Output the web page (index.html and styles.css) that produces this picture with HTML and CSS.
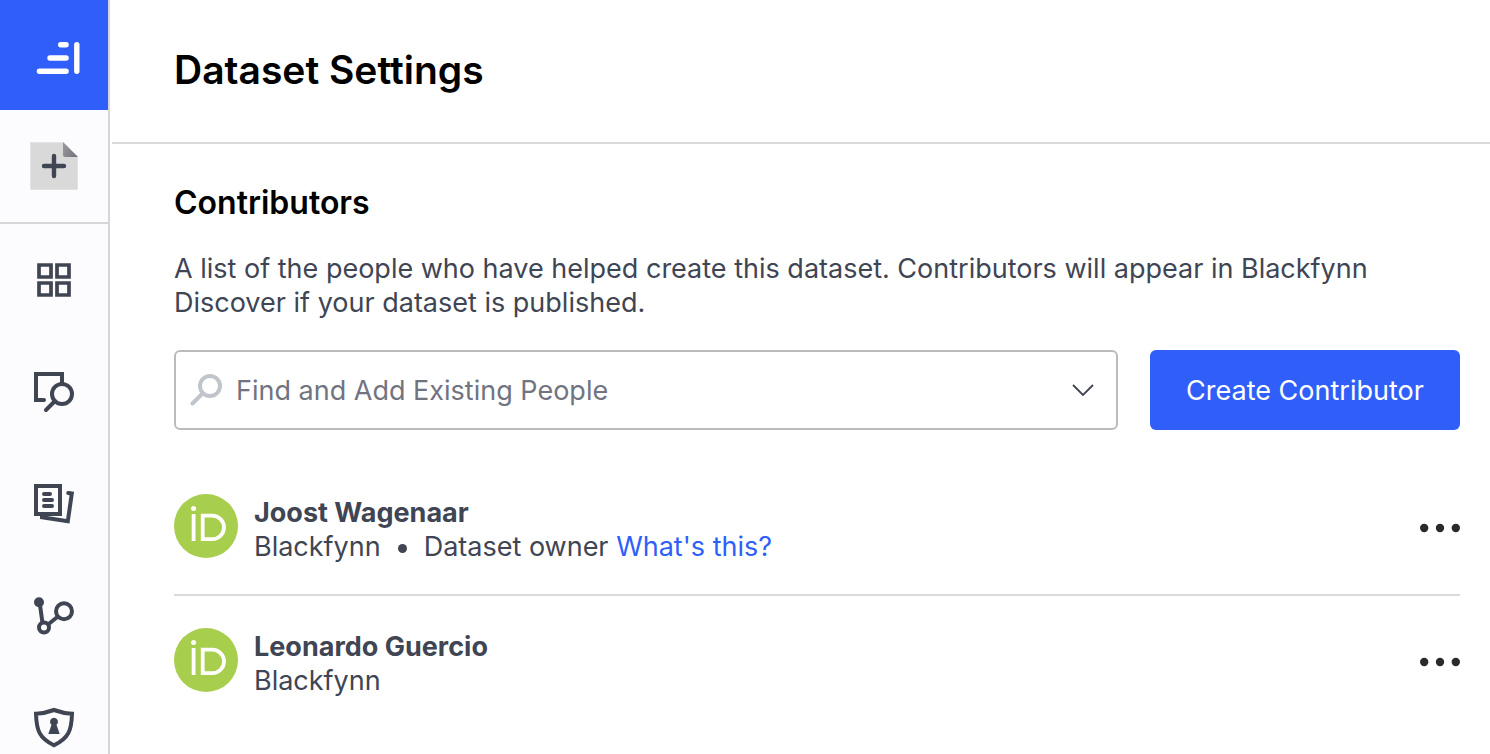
FILE: index.html
```html
<!DOCTYPE html>
<html lang="en">
<head>
<meta charset="utf-8">
<title>Dataset Settings</title>
<link rel="stylesheet" href="styles.css">
</head>
<body>
<div class="app">
  <aside class="sidebar">
    <a class="brand" href="#" aria-label="Home">
      <svg width="48" height="48" viewBox="0 0 48 48" fill="none" stroke="currentColor" stroke-width="5.4" stroke-linecap="round">
        <path d="M26.7 10.7h5.4M16 24h16.1M5.4 37.3h26.7M42.8 10.7v26.6"/>
      </svg>
    </a>
    <div class="create">
      <button class="icon-button" type="button" aria-label="New dataset">
        <svg width="48" height="48" viewBox="0 0 48 48">
          <defs>
            <linearGradient id="fold" x1="0" y1="0.4" x2="1" y2="1">
              <stop offset="0" stop-color="#95969c"/>
              <stop offset="1" stop-color="#6f7077"/>
            </linearGradient>
          </defs>
          <path d="M.5 .5H33L47.500 15V47.500H.5Z" fill="#d9d9d9" stroke="#e3e3e4"/>
          <path d="M33 0L48 15H35a2 2 0 0 1-2-2Z" fill="url(#fold)"/>
          <path d="M14 24h20M24 14v20" stroke="currentColor" stroke-width="4.400" stroke-linecap="round"/>
        </svg>
      </button>
    </div>
    <nav class="nav">
      <a class="nav-link" href="#" aria-label="Overview">
        <svg width="48" height="48" viewBox="0 0 48 48" fill="none" stroke="currentColor" stroke-width="3.700">
          <path d="M9 9h12v12H9zM27 9h12v12H27zM9 27h12v12H9zM27 27h12v12H27z"/>
        </svg>
      </a>
      <a class="nav-link" href="#" aria-label="Explore">
        <svg width="48" height="48" viewBox="0 0 48 48" fill="none" stroke="currentColor" stroke-width="4">
          <path d="M32 16V6H6v26h8"/>
          <path d="M14 32h0M25 33l-9 9" stroke-linecap="round"/>
          <circle cx="32" cy="26" r="10"/>
        </svg>
      </a>
      <a class="nav-link" href="#" aria-label="Files">
        <svg width="48" height="48" viewBox="0 0 48 48" fill="none" stroke="currentColor" stroke-width="4">
          <path d="M6 6h24v28H6z"/>
          <path d="M14 14h6M14 20h8M14 26h8M38.200 13h.6" stroke-linecap="round"/>
          <path d="M38 13l3.800.5L37.800 41.300 12 37.200V35"/>
        </svg>
      </a>
      <a class="nav-link" href="#" aria-label="Relationships">
        <svg width="48" height="48" viewBox="0 0 48 48" fill="none" stroke="currentColor" stroke-width="4">
          <circle cx="9" cy="10.300" r="5" fill="currentColor" stroke="none"/>
          <circle cx="14" cy="35.500" r="5"/>
          <circle cx="34" cy="19.300" r="8"/>
          <path d="M10 13l2.500 18M18 32.500l10-8"/>
        </svg>
      </a>
      <a class="nav-link" href="#" aria-label="Permissions">
        <svg width="48" height="48" viewBox="0 0 48 48" fill="none" stroke="currentColor" stroke-width="4">
          <path d="M24 6C18.500 8 12 9.500 6 9.700 6.500 26 9 34 24 41.300 39 34 41.500 26 42 9.700 36 9.500 29.500 8 24 6Z"/>
          <path d="M24 13.700a4 4 0 0 1 2.500 7.100L29.700 30H18.300l3.200-9.200A4 4 0 0 1 24 13.700Z" fill="currentColor" stroke="none"/>
        </svg>
      </a>
    </nav>
  </aside>

  <main class="main">
    <header class="page-header">
      <h1 class="page-title">Dataset Settings</h1>
    </header>
    <section class="content" aria-labelledby="contributors">
      <h2 class="section-title" id="contributors">Contributors</h2>
      <p class="description">A list of the people who have helped create this dataset. Contributors will appear in Blackfynn Discover if your dataset is published.</p>

      <div class="controls">
        <label class="people-field">
          <svg width="32" height="32" viewBox="0 0 32 32" fill="none" stroke="#c0c5cc" stroke-width="4" stroke-linecap="round" aria-hidden="true">
            <circle cx="20" cy="12" r="10"/>
            <path d="M12.500 19.500L2.500 29.500"/>
          </svg>
          <input class="people-input" type="text" role="combobox" aria-label="Find and Add Existing People" aria-expanded="false" placeholder="Find and Add Existing People">
          <svg width="24" height="24" viewBox="0 0 24 24" fill="none" stroke="#404554" stroke-width="1.800" aria-hidden="true">
            <path d="M2 7l10 10L22 7"/>
          </svg>
        </label>
        <button class="primary-button" type="button">Create Contributor</button>
      </div>

      <ul class="people">
        <li class="person">
          <svg class="orcid" width="64" height="64" viewBox="0 0 64 64" role="img" aria-label="ORCID">
            <circle cx="32" cy="32" r="32" fill="#a7ce4c"/>
            <g fill="none" stroke="#fff" stroke-width="3.800">
              <path d="M19.600 20v27M28.700 21.600h9.500a11.800 11.800 0 0 1 0 23.600h-9.500z"/>
            </g>
            <circle cx="19.600" cy="14.400" r="2.500" fill="#fff"/>
          </svg>
          <div class="details">
            <strong class="name">Joost Wagenaar</strong>
            <div class="meta">
              <span>Blackfynn</span>
              <span class="separator"></span>
              <span>Dataset owner <a class="help-link" href="#">What's this?</a></span>
            </div>
          </div>
          <button class="icon-button menu-button" type="button" aria-label="Options for Joost Wagenaar">
            <svg width="40" height="10" viewBox="0 0 40 10" fill="currentColor"><circle cx="4.200" cy="5" r="4.200"/><circle cx="20" cy="5" r="4.200"/><circle cx="35.800" cy="5" r="4.200"/></svg>
          </button>
        </li>
        <li class="person">
          <svg class="orcid" width="64" height="64" viewBox="0 0 64 64" role="img" aria-label="ORCID">
            <circle cx="32" cy="32" r="32" fill="#a7ce4c"/>
            <g fill="none" stroke="#fff" stroke-width="3.800">
              <path d="M19.600 20v27M28.700 21.600h9.500a11.800 11.800 0 0 1 0 23.600h-9.500z"/>
            </g>
            <circle cx="19.600" cy="14.400" r="2.500" fill="#fff"/>
          </svg>
          <div class="details">
            <strong class="name">Leonardo Guercio</strong>
            <div class="meta"><span>Blackfynn</span></div>
          </div>
          <button class="icon-button menu-button" type="button" aria-label="Options for Leonardo Guercio">
            <svg width="40" height="10" viewBox="0 0 40 10" fill="currentColor"><circle cx="4.200" cy="5" r="4.200"/><circle cx="20" cy="5" r="4.200"/><circle cx="35.800" cy="5" r="4.200"/></svg>
          </button>
        </li>
      </ul>
    </section>
  </main>
</div>
</body>
</html>
```
FILE: styles.css
```css
* {
  box-sizing: border-box;
}

body {
  margin: 0;
  background: #fff;
  color: #404554;
  font: 400 27px/34px Inter, "Liberation Sans", sans-serif;
}

svg {
  display: block;
  flex: none;
}

.app {
  display: flex;
  height: 100vh;
  overflow: hidden;
}

.sidebar {
  flex: none;
  width: 110px;
  overflow: hidden;
  background: #fcfcfe;
  border-right: 2px solid #d6d6d9;
}

.brand {
  display: flex;
  align-items: center;
  justify-content: center;
  height: 110px;
  padding: 6px 0 0 8px;
  background: #2f5ff8;
  color: #fff;
}

.create {
  display: flex;
  align-items: center;
  justify-content: center;
  height: 114px;
  border-bottom: 2px solid #d6d6d9;
}

.icon-button {
  padding: 0;
  border: 0;
  background: none;
  color: #404554;
  cursor: pointer;
}

.nav-link {
  display: flex;
  align-items: center;
  justify-content: center;
  height: 112px;
  color: #404554;
}

.main {
  flex: 1;
  min-width: 0;
  overflow: auto;
}

.page-header {
  margin-left: 2px;
  padding: 46px 62px 48px;
  border-bottom: 2px solid #dadada;
}

.page-title {
  margin: 0;
  color: #000;
  font-size: 39px;
  font-weight: 600;
  line-height: 48px;
}

.content {
  padding: 39px 30px 32px 64px;
}

.section-title {
  margin: 0 0 29px;
  color: #000;
  font-size: 32px;
  font-weight: 600;
  line-height: 40px;
}

.description {
  margin: 0 0 30px;
}

.controls {
  display: flex;
  gap: 32px;
}

.people-field {
  display: flex;
  flex: 1;
  align-items: center;
  gap: 14px;
  min-width: 0;
  height: 80px;
  padding: 0 21px 0 14px;
  border: 2px solid #bbb;
  border-radius: 6px;
}

.people-input {
  flex: 1;
  min-width: 0;
  height: 76px;
  padding: 0;
  border: 0;
  outline: 0;
  background: none;
  color: inherit;
  font: inherit;
}

.people-input::placeholder {
  color: #71747f;
  opacity: 1;
}

.primary-button {
  flex: none;
  min-width: 310px;
  height: 80px;
  padding: 2px 32px 0;
  border: 0;
  border-radius: 6px;
  background: #2f5ff8;
  color: #fff;
  font: inherit;
  cursor: pointer;
}

.people {
  margin: 32px 0 0;
  padding: 0;
  list-style: none;
}

.person {
  display: flex;
  align-items: flex-start;
  gap: 16px;
  padding: 32px 0 30px;
}

.person + .person {
  border-top: 2px solid #dadada;
}

.details {
  flex: 1;
  padding-top: 2px;
}

.name {
  display: block;
  font-weight: 700;
}

.meta {
  display: flex;
  align-items: center;
}

.separator {
  width: 9px;
  height: 9px;
  margin: 2px 17px 0;
  border-radius: 50%;
  background: #404554;
}

.help-link {
  color: #2f5ff8;
  text-decoration: none;
}

.menu-button {
  padding: 29px 0;
  color: #2a2a2a;
}
```
